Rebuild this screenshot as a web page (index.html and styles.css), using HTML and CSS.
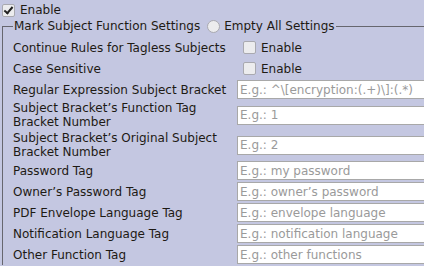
FILE: index.html
```html
<!DOCTYPE html>
<html lang="en">
<head>
    <meta charset="UTF-8">
    <title>Mark Subject Function Settings</title>
    <link rel="stylesheet" href="styles.css">
</head>
<body>
    <div class="panel">
        <label class="check top-check"><span class="box checked"></span>Enable</label>

        <fieldset class="group">
            <legend>
                <span class="legend-title">Mark Subject Function Settings</span>
                <label class="radio"><span class="dot"></span>Empty All Settings</label>
            </legend>

            <div class="row">
                <div class="label">Continue Rules for Tagless Subjects</div>
                <label class="check"><span class="box"></span>Enable</label>
            </div>
            <div class="row">
                <div class="label">Case Sensitive</div>
                <label class="check"><span class="box"></span>Enable</label>
            </div>
            <div class="row">
                <div class="label">Regular Expression Subject Bracket</div>
                <input type="text" placeholder="E.g.: ^\[encryption:(.+)\]:(.*)">
            </div>
            <div class="row tall">
                <div class="label">Subject Bracket’s Function Tag<br>Bracket Number</div>
                <input type="text" placeholder="E.g.: 1">
            </div>
            <div class="row tall">
                <div class="label">Subject Bracket’s Original Subject<br>Bracket Number</div>
                <input type="text" placeholder="E.g.: 2">
            </div>
            <div class="row">
                <div class="label">Password Tag</div>
                <input type="text" placeholder="E.g.: my password">
            </div>
            <div class="row">
                <div class="label">Owner’s Password Tag</div>
                <input type="text" placeholder="E.g.: owner’s password">
            </div>
            <div class="row">
                <div class="label">PDF Envelope Language Tag</div>
                <input type="text" placeholder="E.g.: envelope language">
            </div>
            <div class="row">
                <div class="label">Notification Language Tag</div>
                <input type="text" placeholder="E.g.: notification language">
            </div>
            <div class="row">
                <div class="label">Other Function Tag</div>
                <input type="text" placeholder="E.g.: other functions">
            </div>
        </fieldset>
    </div>
</body>
</html>
```

FILE: styles.css
```css
body {
    margin: 0;
    background-color: #c4c7e1;
    font-family: "DejaVu Sans", Verdana, sans-serif;
    font-size: 12px;
    color: #1e1a14;
    overflow: hidden;
}

.panel {
    padding: 3px 0 0 2px;
}

.check {
    display: flex;
    align-items: center;
    gap: 5px;
}

.top-check {
    height: 14px;
}

.box {
    width: 11px;
    height: 11px;
    border: 1px solid #a9a9b0;
    border-radius: 2px;
    background-color: #ececee;
    position: relative;
}

.box.checked::after {
    content: "";
    position: absolute;
    left: 3px;
    top: 0;
    width: 3px;
    height: 7px;
    border: solid #222;
    border-width: 0 2px 2px 0;
    transform: rotate(40deg);
}

.group {
    margin: 2px -10px 0 0;
    padding: 4px 0 0 10px;
    border: none;
    border-top: 1px solid #66666e;
    border-left: 1px solid #66666e;
}

.group legend {
    display: flex;
    align-items: center;
    padding: 0 1px;
    margin-left: 0;
}

.radio {
    display: flex;
    align-items: center;
    gap: 4px;
    margin-left: 7px;
}

.dot {
    width: 11px;
    height: 11px;
    border: 1px solid #a9a9b0;
    border-radius: 50%;
    background-color: #ececee;
}

.row {
    display: flex;
    align-items: center;
    min-height: 21px;
}

.row.tall {
    min-height: 30px;
}

.label {
    width: 224px;
    line-height: 14px;
}

.row .check {
    margin-left: 6px;
}

.row input {
    width: 200px;
    height: 19px;
    box-sizing: border-box;
    margin: 0;
    padding: 0 2px;
    border: 1px solid #a8a8a8;
    background-color: #fff;
    font-family: inherit;
    font-size: 12px;
    outline: none;
}

.row input::placeholder {
    color: #9a9a9a;
}
```
